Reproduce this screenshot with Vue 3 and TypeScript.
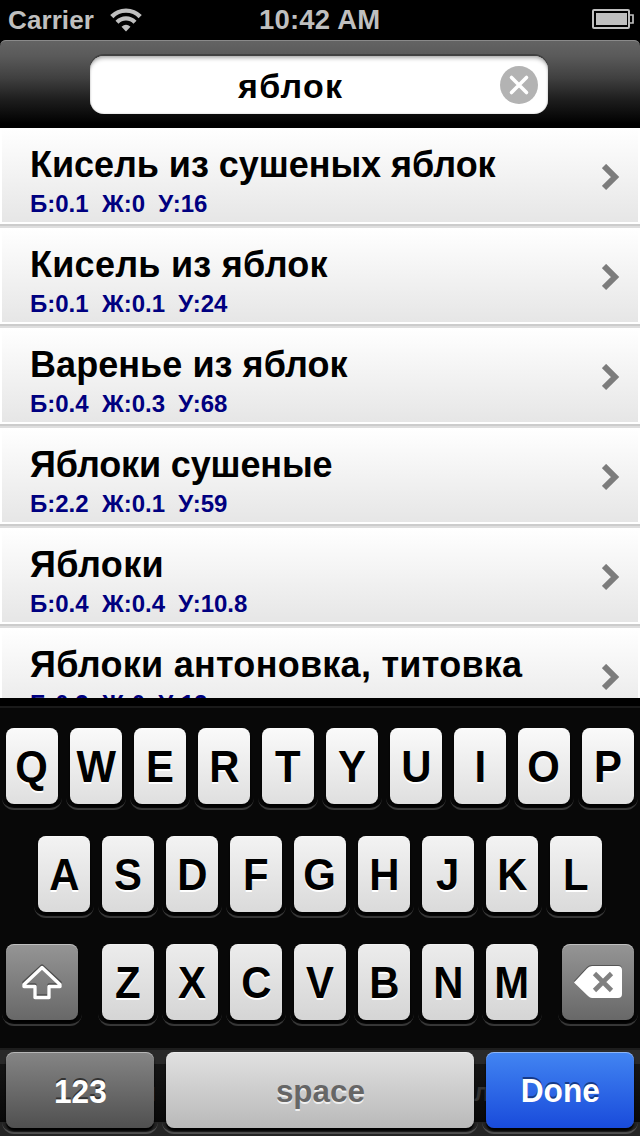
<script setup lang="ts">
interface Food { title: string; info: string; cls: string }

const foods: Food[] = [
  { title: 'Кисель из сушеных яблок', info: 'Б:0.1  Ж:0  У:16', cls: 't1' },
  { title: 'Кисель из яблок', info: 'Б:0.1  Ж:0.1  У:24', cls: 't2' },
  { title: 'Варенье из яблок', info: 'Б:0.4  Ж:0.3  У:68', cls: 't3' },
  { title: 'Яблоки сушеные', info: 'Б:2.2  Ж:0.1  У:59', cls: 't4' },
  { title: 'Яблоки', info: 'Б:0.4  Ж:0.4  У:10.8', cls: 't5' },
  { title: 'Яблоки антоновка, титовка', info: 'Б:0.3  Ж:0  У:12', cls: 't6' },
]
const top: string[] = [...'QWERTYUIOP']
const middle: string[] = [...'ASDFGHJKL']
const bottom: string[] = [...'ZXCVBNM']
</script>

<template>
  <main class="phone">
    <header class="status">
      <span class="carrier">Carrier</span>
      <svg class="wifi" width="32" height="24" viewBox="0 0 32 24">
        <path d="M1.800 8.600C9.500 .6 22.500 .6 30.200 8.600" fill="none" stroke="#bfbfbf" stroke-width="4.400" />
        <path d="M7 14.200C12 9 20 9 25 14.200" fill="none" stroke="#bfbfbf" stroke-width="4.200" />
        <path d="M11.500 18.800Q16 14.600 20.500 18.800L16 23.500Z" fill="#bfbfbf" />
      </svg>
      <span class="time">10:42 AM</span>
      <svg class="battery" width="42" height="20" viewBox="0 0 42 20">
        <rect x="1" y="1" width="36" height="18" rx="1" fill="none" stroke="#bfbfbf" stroke-width="2" />
        <rect x="4" y="4" width="31" height="12" fill="#bfbfbf" />
        <path d="M38 6H41V14H38" fill="none" stroke="#bfbfbf" stroke-width="1.700" />
      </svg>
    </header>

    <section class="navbar">
      <div class="search">
        <span class="query">яблок</span>
        <svg class="clear" width="38" height="38" viewBox="0 0 38 38">
          <circle cx="19" cy="19" r="19" fill="#b3b3b3" />
          <path d="M11.500 11.500L26.500 26.500M26.500 11.500L11.500 26.500" stroke="#fff" stroke-width="3.600" stroke-linecap="round" />
        </svg>
      </div>
    </section>

    <section class="list">
      <article v-for="f in foods" :key="f.title" class="row">
        <div class="cell">
          <div class="texts">
            <div class="title"><span :class="f.cls">{{ f.title }}</span></div>
            <div class="info">{{ f.info }}</div>
          </div>
          <svg class="chevron" width="18" height="27" viewBox="0 0 18 27">
            <path d="M2 2L13 13L2 24" fill="none" stroke="#7c7c7c" stroke-width="6" />
          </svg>
        </div>
      </article>
    </section>

    <section class="keyboard">
      <div class="keys">
        <div v-for="k in top" :key="k" class="key k1"><span>{{ k }}</span></div>
      </div>
      <div class="keys">
        <div v-for="k in middle" :key="k" class="key k2"><span>{{ k }}</span></div>
      </div>
      <div class="keys wide">
        <div class="key mod">
          <svg width="42" height="38" viewBox="0 0 42 38">
            <path d="M21 3L39 19.500V22H28V33H14V22H3V19.500Z" fill="none" stroke="#4d4d4d" stroke-width="3.400" stroke-linejoin="round" />
            <path d="M21 4.500L39 21.500V23.500H28V34.500H14V23.500H3V21.500Z" fill="none" stroke="#fff" stroke-width="3.400" stroke-linejoin="round" />
          </svg>
        </div>
        <div class="letters">
          <div v-for="k in bottom" :key="k" class="key k3"><span>{{ k }}</span></div>
        </div>
        <div class="key mod">
          <svg width="50" height="36" viewBox="0 0 50 36">
            <path d="M1 17L14 3Q16 1 19 1H45Q49 1 49 5V28Q49 32 45 32H19Q17 32 15 30Z" fill="#555" />
            <path d="M1 18.500L14 4.500Q16 2 19 2H45Q49 2 49 6V30Q49 34 45 34H19Q17 34 15 32Z" fill="#fff" />
            <path d="M21.500 9.500L38.500 26.500M38.500 9.500L21.500 26.500" stroke="#808080" stroke-width="4.600" />
          </svg>
        </div>
      </div>
      <div class="bar">
        <span class="ghost g1">н</span>
        <span class="ghost g2">л</span>
        <div class="key side"><span>123</span></div>
        <div class="key space"><span>space</span></div>
        <div class="key side done"><span>Done</span></div>
      </div>
    </section>
  </main>
</template>

<style>
body { margin: 0; background: #000; }
</style>

<style scoped>
.phone {
  width: 640px; height: 1136px; overflow: hidden; background: #000;
  display: flex; flex-direction: column;
  font-family: "Liberation Sans", Arial, sans-serif; font-weight: bold;
}
.status {
  height: 40px; box-sizing: border-box; padding: 0 6px 0 8px; flex: none;
  display: grid; grid-template-columns: 102px 152px 1fr 42px;
  align-items: center; color: #bfbfbf;
}
.carrier { font-size: 26px; line-height: 40px; letter-spacing: .1px; }
.wifi { margin-top: -1px; }
.time { font-size: 27.500px; line-height: 40px; margin-left: -3px; letter-spacing: .2px; }
.battery { margin-top: -2px; }
.navbar {
  height: 88px; box-sizing: border-box; padding: 16px 92px 14px 90px; flex: none;
  border-radius: 6px 6px 0 0;
  background: linear-gradient(#646464 0, #5a5a5a 16px, #404040 38px, #1d1d1d 60px, #000 84px);
  box-shadow: inset 0 2px 0 -1px #8a8a8a;
}
.search {
  height: 58px; border-radius: 14px; background: #fff;
  display: flex; align-items: center; justify-content: space-between;
  padding: 0 10px 0 148px; box-sizing: border-box;
  box-shadow: 0 -2px 0 #414141, inset 0 4px 4px -2px #aaa, inset 0 0 2px #bbb;
}
.query { font-size: 34px; line-height: 58px; padding-top: 1px; letter-spacing: 1.300px; }
.clear { display: block; }
.list { height: 570px; overflow: hidden; flex: none; background: #fff; }
.row {
  height: 100px; box-sizing: border-box; padding-bottom: 2px;
  border-bottom: 2px solid #dedede; background: #ccc;
}
.cell {
  height: 96px; box-sizing: border-box; border: solid #fff; border-width: 0 2px 2px;
  background: linear-gradient(#fff, #e6e6e6) padding-box;
  display: flex; justify-content: space-between;
  padding: 18px 18px 0 28px;
}
.title { font-size: 36px; line-height: 36px; height: 36px; margin-top: 1px; white-space: nowrap; }
.t1 { letter-spacing: -.04px; }
.t2 { letter-spacing: .26px; }
.t3 { letter-spacing: .06px; }
.t4 { letter-spacing: -.14px; }
.t5 { letter-spacing: .4px; }
.t6 { letter-spacing: .27px; }
.info { font-size: 24px; line-height: 28px; margin-top: 7px; color: #000080; white-space: pre; }
.chevron { margin-top: 18px; }
.keyboard {
  height: 438px; flex: none; box-sizing: border-box; padding-top: 30px;
  background: linear-gradient(#000 0 8px, #1a1a1a 8px 10px, #080808 10px);
  isolation: isolate;
}
.keys { display: flex; justify-content: center; gap: 12px; height: 76px; margin-bottom: 32px; }
.wide { justify-content: space-between; padding: 0 6px; margin-bottom: 28px; }
.letters { display: flex; gap: 12px; }
.key {
  position: relative; width: 52px; height: 76px; border-radius: 8px; flex: none;
  display: flex; align-items: center; justify-content: center;
  font-size: 45px; line-height: 76px; color: #000; text-shadow: 0 2px 0 #fff;
  box-shadow: 0 3px 2px #000, inset 0 1px 0 rgba(255, 255, 255, .4);
}
.key span { transform: translateY(1px) scaleX(.93); }
.key::after {
  content: ""; position: absolute; z-index: -1; left: -4px; right: -4px; bottom: -6px;
  height: 18px; border-bottom: 2px solid #383838; border-radius: 0 0 12px 12px;
}
.k1 { background: linear-gradient(#fafafa, #dfdfdf); }
.k2 { background: linear-gradient(#f3f3f3, #dadada); }
.k3 { background: linear-gradient(#ececec, #d5d5d5); }
.mod { width: 72px; background: linear-gradient(#959595, #686868); }
.bar {
  position: relative; isolation: isolate; height: 88px; box-sizing: border-box; padding: 4px 6px 0;
  display: flex; gap: 12px;
  background: linear-gradient(#1d1d1d 0 2px, #292929 2px 16px, #151515 16px, #080808 74px, #242424 74px);
}
.ghost { position: absolute; z-index: -1; top: 30px; font-size: 25px; line-height: 28px; color: #333; }
.g1 { left: 141px; }
.g2 { left: 474px; }
.side { width: 148px; font-size: 34px; color: #fff; text-shadow: 0 -2px 0 #333; background: linear-gradient(#858585, #505050); }
.space { width: 308px; font-size: 32px; color: #666; text-shadow: 0 2px 0 #f0f0f0; background: linear-gradient(#e1e1e1, #b9b9b9); }
.space span { transform: translateY(1px) scaleX(.98); }
.done { font-size: 33px; background: linear-gradient(#4285f2, #194bdb); text-shadow: 0 -2px 0 #163a88; }
.done span { transform: translateY(1px) scaleX(.96); }
.bar .key::after { border-color: #505050; }
</style>
